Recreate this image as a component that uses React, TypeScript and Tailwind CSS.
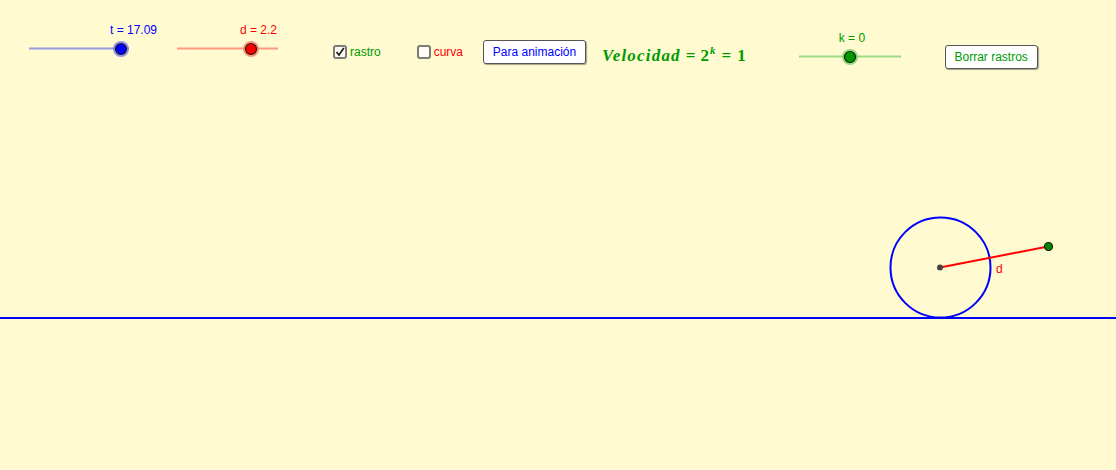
import React from "react";

type SliderProps = {
  label: string;
  labelClass: string;
  trackColor: string;
  thumbColor: string;
  haloColor: string;
  thumbX: number;
  width: number;
  className: string;
};

function Slider({ label, labelClass, trackColor, thumbColor, haloColor, thumbX, width, className }: SliderProps) {
  return (
    <div className={`flex flex-col shrink-0 overflow-visible ${className}`}>
      <span className={`text-[12px] leading-[14px] whitespace-nowrap ${labelClass}`}>{label}</span>
      <svg width={width} height={24} className="block">
        <line x1={8} y1={11.5} x2={width - 8} y2={11.5} stroke={trackColor} strokeWidth={2} />
        <circle cx={thumbX} cy={12} r={8} fill={haloColor} opacity={0.7} />
        <circle cx={thumbX} cy={12} r={5.5} fill={thumbColor} stroke="#1a1a1a" strokeWidth={1.2} />
      </svg>
    </div>
  );
}

function Checkbox({ checked }: { checked: boolean }) {
  return (
    <span className="w-[14px] h-[14px] rounded-[3px] border-2 border-[#7d7d78] bg-[#fdfdf6] flex items-center justify-center">
      {checked && (
        <svg width="10" height="10" viewBox="0 0 10 10">
          <path d="M1.5 5 L4 8 L8.8 1" fill="none" stroke="#222" strokeWidth="1.8" />
        </svg>
      )}
    </span>
  );
}

export default function App() {
  return (
    <div
      className="relative w-[1116px] h-[470px] bg-[#fffad0] overflow-hidden"
      style={{ fontFamily: '"Liberation Sans", Arial, sans-serif' }}
    >
      {/* geometry */}
      <svg className="absolute inset-0" width={1116} height={470}>
        <line x1={0} y1={318} x2={1116} y2={318} stroke="#0000ff" strokeWidth={2} />
        <circle cx={940.5} cy={267.5} r={50} fill="none" stroke="#0000ff" strokeWidth={2} />
        <line x1={940} y1={267.5} x2={1048} y2={246.5} stroke="#ff0000" strokeWidth={2} />
        <circle cx={940} cy={267.5} r={3} fill="#444" />
        <circle cx={1048.5} cy={246.5} r={4} fill="#008800" stroke="#1a1a1a" strokeWidth={1.2} />
        <text x={996} y={273} fill="#ff0000" fontSize={12} fontFamily='"Liberation Sans", Arial, sans-serif'>
          d
        </text>
      </svg>

      {/* controls */}
      <div className="relative flex items-start">
        <Slider
          className="w-[116px] ml-[21px] mt-[23px]"
          label="t = 17.09"
          labelClass="text-[#0000ff] ml-[89px]"
          trackColor="#9a9ae0"
          thumbColor="#0000ff"
          haloColor="#6a6af0"
          thumbX={100}
          width={116}
        />
        <Slider
          className="w-[117px] ml-[32px] mt-[23px]"
          label="d = 2.2"
          labelClass="text-[#ff0000] ml-[71px]"
          trackColor="#ff9a80"
          thumbColor="#ff0000"
          haloColor="#ff6a55"
          thumbX={82}
          width={117}
        />
        <label className="ml-[47px] mt-[43px] flex items-center gap-[3px]">
          <Checkbox checked />
          <span className="text-[12px] text-[#009900]">rastro</span>
        </label>
        <label className="ml-[36px] mt-[43px] flex items-center gap-[3px]">
          <Checkbox checked={false} />
          <span className="text-[12px] text-[#ff0000]">curva</span>
        </label>
        <button className="ml-[20px] mt-[40px] w-[103px] h-[24px] bg-white border border-[#555] rounded-[3px] shadow-[1px_1px_1px_rgba(0,0,0,0.35)] text-[12px] text-[#0000ff]">
          Para animación
        </button>
        <div
          className="ml-[16px] mt-[46px] text-[17px] leading-[20px] font-bold text-[#009900] whitespace-nowrap flex items-baseline"
          style={{ fontFamily: '"Liberation Serif", "Times New Roman", serif' }}
        >
          <span className="italic tracking-[1.2px]">Velocidad</span>
          <span className="mx-[5px]">=</span>
          <span>2</span>
          <span className="italic text-[11px] relative -top-[7px] ml-[1px]">k</span>
          <span className="mx-[6px]">=</span>
          <span>1</span>
        </div>
        <Slider
          className="w-[118px] ml-[45px] mt-[31px]"
          label="k = 0"
          labelClass="text-[#009900] ml-[48px]"
          trackColor="#99dd88"
          thumbColor="#009900"
          haloColor="#66cc55"
          thumbX={59}
          width={118}
        />
        <button className="ml-[36px] mt-[45px] w-[93px] h-[24px] bg-white border border-[#555] rounded-[3px] shadow-[1px_1px_1px_rgba(0,0,0,0.35)] text-[12px] text-[#009900]">
          Borrar rastros
        </button>
      </div>
    </div>
  );
}
